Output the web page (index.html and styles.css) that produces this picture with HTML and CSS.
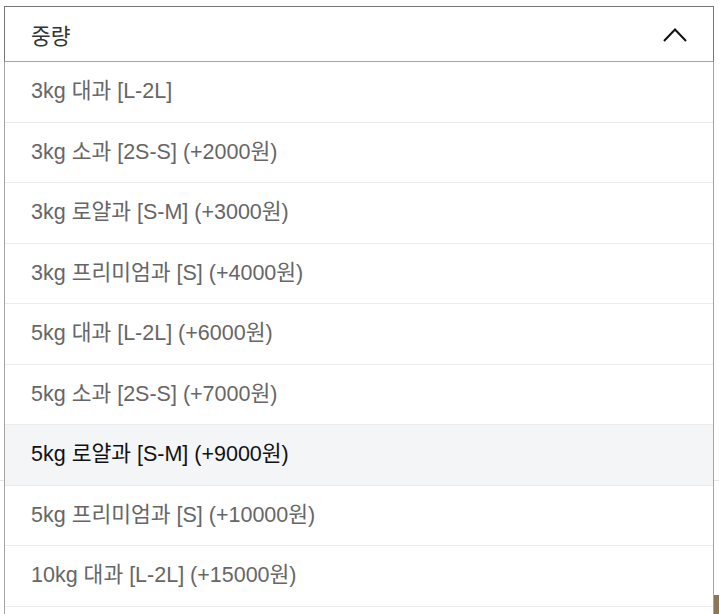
FILE: index.html
```html
<!DOCTYPE html>
<html lang="ko">
<head>
  <meta charset="UTF-8">
  <title>옵션 선택</title>
  <link rel="stylesheet" href="styles.css">
</head>
<body>

  <div class="pagina">
    <div class="linea"></div>
    <div class="foto"></div>
  </div>

  <div class="selector">
    <div class="cabecera">
      <span>중량</span>
      <svg class="flecha" width="24" height="14" viewBox="0 0 24 14">
        <polyline points="1,13 12,1.5 23,13" fill="none" stroke="#111" stroke-width="2" />
      </svg>
    </div>
    <ul class="opciones">
      <li>3kg 대과 [L-2L]</li>
      <li>3kg 소과 [2S-S] (+2000원)</li>
      <li>3kg 로얄과 [S-M] (+3000원)</li>
      <li>3kg 프리미엄과 [S] (+4000원)</li>
      <li>5kg 대과 [L-2L] (+6000원)</li>
      <li>5kg 소과 [2S-S] (+7000원)</li>
      <li class="activo">5kg 로얄과 [S-M] (+9000원)</li>
      <li>5kg 프리미엄과 [S] (+10000원)</li>
      <li>10kg 대과 [L-2L] (+15000원)</li>
    </ul>
  </div>

</body>
</html>
```

FILE: styles.css
```css
body {
  margin: 0;
  background: #ffffff;
  font-family: "Liberation Sans", "Noto Sans CJK KR", sans-serif;
  overflow: hidden;
}

.pagina {
  height: 614px;
}

.linea {
  height: 480px;
  border-bottom: 1px solid #e6e6e6;
}

.foto {
  margin-top: 114px;
  margin-left: auto;
  width: 200px;
  height: 60px;
  background: linear-gradient(90deg, #7d6448, #8f7657);
}

.selector {
  position: absolute;
  top: 6px;
  left: 4px;
  width: 710px;
  background: #ffffff;
}

.cabecera {
  display: flex;
  align-items: center;
  justify-content: space-between;
  height: 54px;
  padding: 0 26px;
  border: 1px solid #767676;
  border-bottom-color: #a2a6ac;
  font-size: 21.5px;
  color: #333333;
}

.flecha {
  display: block;
  margin-top: 2px;
}

.opciones {
  list-style: none;
  margin: 0;
  padding: 0 0 30px;
  border-left: 1px solid #a4a4a4;
  border-right: 1px solid #a4a4a4;
}

.opciones li {
  padding: 14px 26px;
  font-size: 21.5px;
  line-height: 31.5px;
  color: #666666;
  border-bottom: 1px solid #ebebeb;
}

.opciones li.activo {
  background: #f4f5f7;
  color: #111111;
}
```
